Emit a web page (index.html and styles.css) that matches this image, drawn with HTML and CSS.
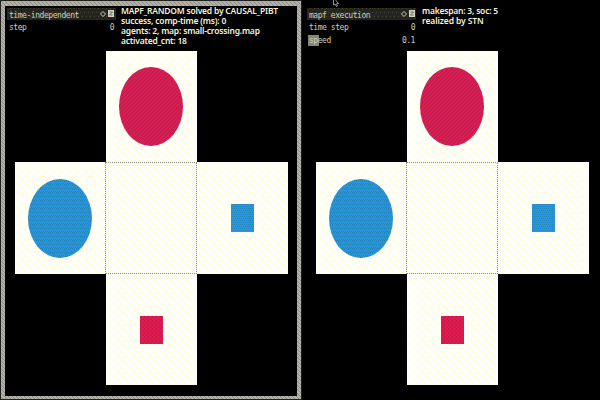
FILE: index.html
```
<!DOCTYPE html>
<html lang="en">
<head>
<meta charset="utf-8">
<title>MAPF visualizer</title>
<link rel="stylesheet" href="styles.css">
</head>
<body>
<main class="desktop">
  <section class="window focused">
    <header class="top">
      <div class="panel">
        <div class="row title"><span>time-independent</span><span class="tools"><svg class="icon" viewBox="0 0 6 8"><path d="M.5 4 3 1.5 5.5 4 3 6.5z"/></svg><svg class="icon box" viewBox="0 0 6 8"><path class="fill" d="M0 0h6v7H0z"/><path d="M1.5 2h3L1.5 5h3"/></svg></span></div>
        <div class="row"><span>step</span><span>0</span></div>
      </div>
      <div class="info"><p class="l1">MAPF_RANDOM solved by CAUSAL_PIBT</p><p class="l2">success, comp-time (ms): 0</p><p class="l3">agents: 2, map: small-crossing.map</p><p class="l4">activated_cnt: 18</p></div>
    </header>
    <div class="map">
      <div class="cell north"><div class="agent red"></div></div>
      <div class="cell west"><div class="agent blue"></div></div>
      <div class="cell center"></div>
      <div class="cell east"><div class="goal blue"></div></div>
      <div class="cell south"><div class="goal red"></div></div>
    </div>
  </section>
  <section class="window second">
    <header class="top">
      <div class="panel">
        <div class="row title"><span>mapf execution</span><span class="tools"><svg class="icon" viewBox="0 0 6 8"><path d="M.5 4 3 1.5 5.5 4 3 6.5z"/></svg><svg class="icon box" viewBox="0 0 6 8"><path class="fill" d="M0 0h6v7H0z"/><path d="M1.5 2h3L1.5 5h3"/></svg></span></div>
        <div class="row"><span>time step</span><span>0</span></div>
        <div class="row speed"><span>speed</span><span>0.1</span></div>
      </div>
      <div class="info"><p class="r1">makespan: 3, soc: 5</p><p class="r2">realized by STN</p></div>
    </header>
    <div class="map">
      <div class="cell north"><div class="agent red"></div></div>
      <div class="cell west"><div class="agent blue"></div></div>
      <div class="cell center"></div>
      <div class="cell east"><div class="goal blue"></div></div>
      <div class="cell south"><div class="goal red"></div></div>
    </div>
  </section>
  <svg class="cursor" viewBox="0 0 6 7"><path d="M.5 0v5l1.5-1 1.5 2.5 1-.5-1-2.3 2-.2L2.5 0"/></svg>
</main>
</body>
</html>
```
FILE: styles.css
```
* { box-sizing: border-box; }
body { margin: 0; background: #000; }
.desktop {
  position: relative;
  width: 600px;
  height: 400px;
  overflow: hidden;
  display: grid;
  grid-template-columns: 302px 298px;
  background: #000;
}
.window { height: 400px; padding: 6px 0 0 5px; }
.second { padding-left: 4px; }
.focused {
  padding: 0;
  border: 5px solid transparent;
  border-top-width: 6px;
  border-bottom-width: 4px;
  background:
    linear-gradient(#000, #000) padding-box,
    url("data:image/svg+xml,%3Csvg xmlns='http://www.w3.org/2000/svg' width='4' height='4' shape-rendering='crispEdges'%3E%3Cpath fill='%23b4b2a8' d='M0 0h4v4H0z'/%3E%3Cpath fill='%238c8a84' d='M0 0h1v1H0zM2 2h1v1H2zM3 3h1v1H3zM1 1h1v1H1z'/%3E%3C/svg%3E") border-box;
  outline: 1px solid #22221e;
  outline-offset: -1px;
}
.top { display: flex; height: 45px; padding: 2px 0 0 2px; }
.panel {
  width: 109px;
  flex: none;
  font: 8px/13px "DejaVu Sans Mono", monospace;
  letter-spacing: -.45px;
  color: #cfcfb0;
}
.second .top { padding-left: 1px; }
.second .info { padding-left: 6px; }
.row { display: flex; justify-content: space-between; height: 13px; padding: 0 2px 0 2px; white-space: pre; }
.second .row { padding-right: 1px; }
.title {
  height: 12px;
  margin-bottom: 1px;
  line-height: 15px;
  background: #242426 url("data:image/svg+xml,%3Csvg xmlns='http://www.w3.org/2000/svg' width='8' height='8' shape-rendering='crispEdges'%3E%3Cpath fill='%23484820' d='M2 0h1v1H2zM6 0h1v1H6zM0 4h1v1H0zM4 4h1v1H4z'/%3E%3C/svg%3E") fixed;
}
.speed { background: linear-gradient(#85857c, #85857c) 1px 1px / 11px 11px no-repeat; }
.tools { display: flex; gap: 2px; padding-top: 2px; }
.icon { width: 6px; height: 8px; fill: none; stroke: #c8c8b0; stroke-width: 1; }
.box { stroke: #555; stroke-width: .8; }
.box .fill { fill: #d0d0c0; stroke: none; }
.info { padding-left: 5px; margin-top: -2px; font: 600 8.5px/10px "Noto Sans", sans-serif; color: #f2f2dd; white-space: nowrap; }
.info p { margin: 0; }
.l1 { letter-spacing: -.21px; }
.l2 { letter-spacing: -.2px; }
.l3 { letter-spacing: -.2px; }
.l4 { letter-spacing: -.22px; }
.r1 { letter-spacing: -.22px; }
.r2 { letter-spacing: -.1px; }
.map {
  display: grid;
  grid-template-columns: 91px 91px 91px;
  grid-template-rows: 111px 112px 111px;
  margin-left: 10px;
  width: 273px;
}
.cell {
  display: flex;
  align-items: center;
  justify-content: center;
  background: #fefefe url("data:image/svg+xml,%3Csvg xmlns='http://www.w3.org/2000/svg' width='8' height='8' shape-rendering='crispEdges'%3E%3Cpath fill='%23ffffae' d='M2 0h1v1H2zM6 4h1v1H6z'/%3E%3C/svg%3E") fixed;
}
.north { grid-area: 1 / 2; }
.west { grid-area: 2 / 1; border-right: 1px dotted #8c8c84; }
.west .agent { margin-right: 0; }
.center { grid-area: 2 / 2; border: 1px dotted #8c8c84; border-left: 0; }
.east { grid-area: 2 / 3; padding-right: 1px; }
.south { grid-area: 3 / 2; }
.agent { width: 64px; height: 79px; margin-right: 1px; border-radius: 50%; }
.goal { width: 23px; height: 28px; }
.east .goal { margin-left: 1px; }
.red { background: #e31a50 url("data:image/svg+xml,%3Csvg xmlns='http://www.w3.org/2000/svg' width='4' height='4' shape-rendering='crispEdges'%3E%3Cpath fill='%23b81c4c' d='M0 0h1v1H0zM2 2h1v1H2zM1 3h1v1H1zM3 1h1v1H3z'/%3E%3C/svg%3E") fixed; }
.blue { background: #2494ec url("data:image/svg+xml,%3Csvg xmlns='http://www.w3.org/2000/svg' width='4' height='4' shape-rendering='crispEdges'%3E%3Cpath fill='%232888ac' d='M0 0h1v1H0zM2 0h1v1H2zM1 2h1v1H1zM3 2h1v1H3z'/%3E%3C/svg%3E") fixed; }
.cursor { position: absolute; left: 333px; top: 0; width: 6px; height: 7px; fill: #000; stroke: #ccc; stroke-width: .7; }
```
